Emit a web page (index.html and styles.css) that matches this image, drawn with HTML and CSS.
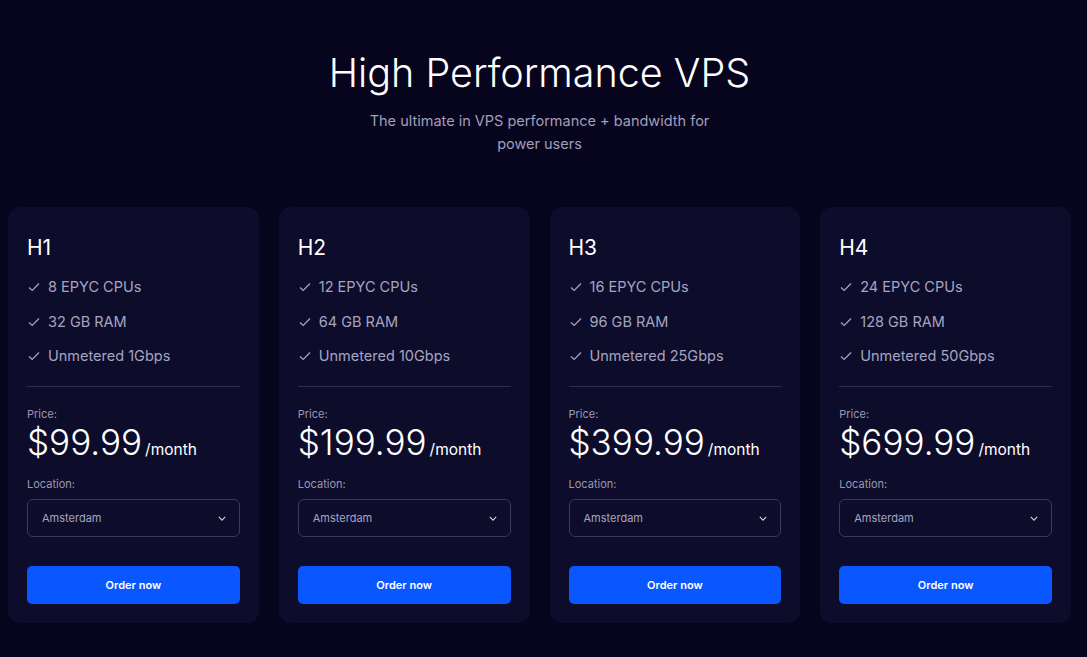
FILE: index.html
```html
<!DOCTYPE html>
<html>
<head>
<meta charset="utf-8">
<link rel="stylesheet" href="styles.css">
</head>
<body>
<section class="hero">
  <h1 class="title">High Performance VPS</h1>
  <p class="subtitle">The ultimate in VPS performance + bandwidth for power users</p>
</section>
<div class="grid">
  <div class="card">
    <h2 class="plan">H1</h2>
    <ul class="features">
      <li><svg class="check" viewBox="0 0 12 10"><path d="M1 5.5l3.2 3L11 1.5"/></svg>8 EPYC CPUs</li>
      <li><svg class="check" viewBox="0 0 12 10"><path d="M1 5.5l3.2 3L11 1.5"/></svg>32 GB RAM</li>
      <li><svg class="check" viewBox="0 0 12 10"><path d="M1 5.5l3.2 3L11 1.5"/></svg>Unmetered 1Gbps</li>
    </ul>
    <div class="divider"></div>
    <div class="label">Price:</div>
    <div class="price"><span class="amount">$99.99</span><span class="per">/month</span></div>
    <div class="label loc">Location:</div>
    <div class="select"><span>Amsterdam</span><svg class="chev" viewBox="0 0 10 6"><path d="M1 1l4 4 4-4"/></svg></div>
    <button class="order">Order now</button>
  </div>
  <div class="card">
    <h2 class="plan">H2</h2>
    <ul class="features">
      <li><svg class="check" viewBox="0 0 12 10"><path d="M1 5.5l3.2 3L11 1.5"/></svg>12 EPYC CPUs</li>
      <li><svg class="check" viewBox="0 0 12 10"><path d="M1 5.5l3.2 3L11 1.5"/></svg>64 GB RAM</li>
      <li><svg class="check" viewBox="0 0 12 10"><path d="M1 5.5l3.2 3L11 1.5"/></svg>Unmetered 10Gbps</li>
    </ul>
    <div class="divider"></div>
    <div class="label">Price:</div>
    <div class="price"><span class="amount">$199.99</span><span class="per">/month</span></div>
    <div class="label loc">Location:</div>
    <div class="select"><span>Amsterdam</span><svg class="chev" viewBox="0 0 10 6"><path d="M1 1l4 4 4-4"/></svg></div>
    <button class="order">Order now</button>
  </div>
  <div class="card">
    <h2 class="plan">H3</h2>
    <ul class="features">
      <li><svg class="check" viewBox="0 0 12 10"><path d="M1 5.5l3.2 3L11 1.5"/></svg>16 EPYC CPUs</li>
      <li><svg class="check" viewBox="0 0 12 10"><path d="M1 5.5l3.2 3L11 1.5"/></svg>96 GB RAM</li>
      <li><svg class="check" viewBox="0 0 12 10"><path d="M1 5.5l3.2 3L11 1.5"/></svg>Unmetered 25Gbps</li>
    </ul>
    <div class="divider"></div>
    <div class="label">Price:</div>
    <div class="price"><span class="amount">$399.99</span><span class="per">/month</span></div>
    <div class="label loc">Location:</div>
    <div class="select"><span>Amsterdam</span><svg class="chev" viewBox="0 0 10 6"><path d="M1 1l4 4 4-4"/></svg></div>
    <button class="order">Order now</button>
  </div>
  <div class="card">
    <h2 class="plan">H4</h2>
    <ul class="features">
      <li><svg class="check" viewBox="0 0 12 10"><path d="M1 5.5l3.2 3L11 1.5"/></svg>24 EPYC CPUs</li>
      <li><svg class="check" viewBox="0 0 12 10"><path d="M1 5.5l3.2 3L11 1.5"/></svg>128 GB RAM</li>
      <li><svg class="check" viewBox="0 0 12 10"><path d="M1 5.5l3.2 3L11 1.5"/></svg>Unmetered 50Gbps</li>
    </ul>
    <div class="divider"></div>
    <div class="label">Price:</div>
    <div class="price"><span class="amount">$699.99</span><span class="per">/month</span></div>
    <div class="label loc">Location:</div>
    <div class="select"><span>Amsterdam</span><svg class="chev" viewBox="0 0 10 6"><path d="M1 1l4 4 4-4"/></svg></div>
    <button class="order">Order now</button>
  </div>
</div>
</body>
</html>
```
FILE: styles.css
```css
* { box-sizing: border-box; }
html, body { margin: 0; padding: 0; }
body {
  background: #07041e;
  font-family: Inter, "Liberation Sans", sans-serif;
  color: #ffffff;
  padding: 0 16px 0 8px;
}
.hero {
  display: flex;
  flex-direction: column;
  align-items: center;
  padding-top: 50px;
}
.title {
  margin: 0;
  font-family: Inter, sans-serif;
  font-weight: 300;
  font-size: 39.5px;
  line-height: 46px;
  letter-spacing: 0;
}
.subtitle {
  margin: 13px 0 0;
  width: 350px;
  text-align: center;
  font-size: 14.5px;
  line-height: 23px;
  color: #a19fb8;
}
.grid {
  display: grid;
  grid-template-columns: repeat(4, 1fr);
  gap: 20px;
  margin-top: 52px;
}
.card {
  background: #0d0c2b;
  border-radius: 12px;
  padding: 28px 19px 19px;
  display: flex;
  flex-direction: column;
}
.plan {
  margin: 0;
  font-family: Inter, sans-serif;
  font-weight: 400;
  font-size: 21px;
  line-height: 26px;
}
.features {
  list-style: none;
  margin: 17px 0 0;
  padding: 0;
  display: flex;
  flex-direction: column;
  gap: 16.5px;
}
.features li {
  display: flex;
  align-items: center;
  gap: 8px;
  font-size: 14.5px;
  line-height: 18px;
  color: #a6a5c0;
}
.check {
  width: 12px;
  height: 10px;
  fill: none;
  stroke: #a6a5c0;
  stroke-width: 1.2;
  margin-left: 1px;
}
.divider {
  height: 1px;
  background: #2d2c4a;
  margin-top: 21px;
}
.label {
  margin-top: 21px;
  font-size: 11px;
  line-height: 13px;
  color: #9a99b2;
}
.label.loc { margin-top: 15px; }
.price {
  display: flex;
  align-items: baseline;
  gap: 3px;
  margin-top: 0;
}
.amount {
  font-family: Inter, sans-serif;
  font-weight: 300;
  font-size: 35px;
  line-height: 42px;
}
.per {
  font-size: 15.5px;
  color: #ffffff;
}
.select {
  margin-top: 8px;
  height: 38px;
  border: 1px solid #3b3a57;
  border-radius: 6px;
  display: flex;
  align-items: center;
  justify-content: space-between;
  padding: 0 13px 0 14px;
  font-size: 11px;
  color: #a6a5c0;
}
.chev {
  width: 8px;
  height: 5px;
  fill: none;
  stroke: #d0d0e0;
  stroke-width: 1.4;
}
.order {
  margin-top: 29px;
  height: 38px;
  border: none;
  border-radius: 5px;
  background: #0b57ff;
  color: #ffffff;
  font-family: Inter, "Liberation Sans", sans-serif;
  font-size: 11px;
  font-weight: 600;
  cursor: pointer;
}
```
